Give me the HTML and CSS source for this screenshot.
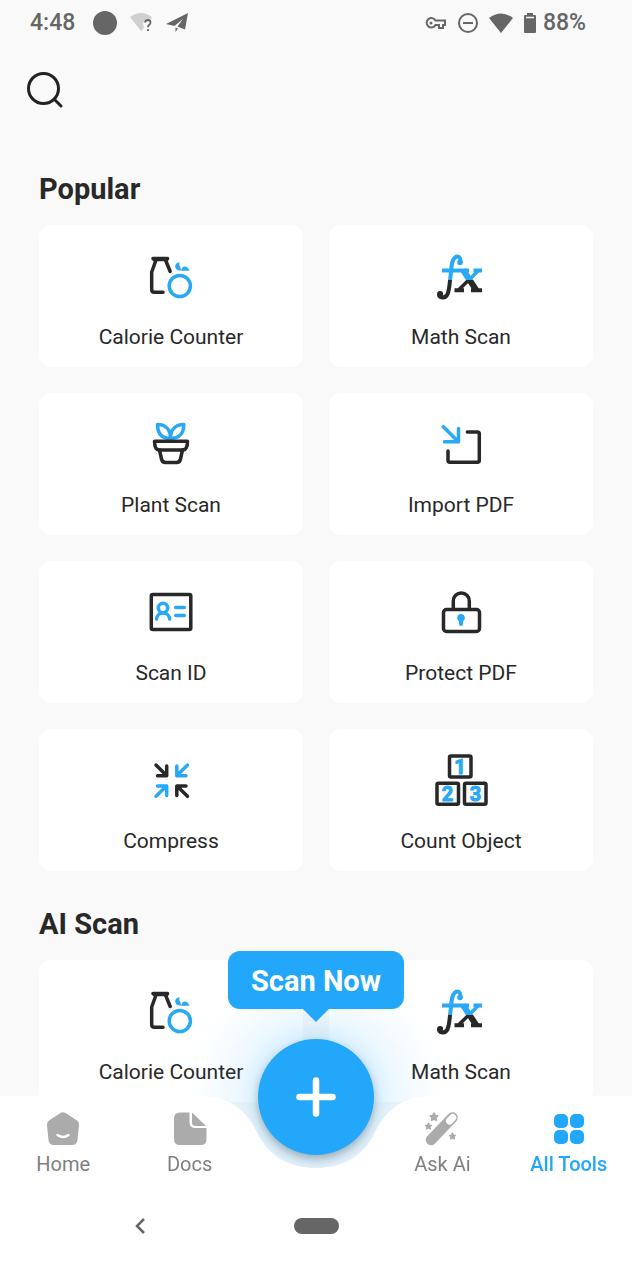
FILE: index.html
```html
<!DOCTYPE html>
<html lang="en">

<head>
  <meta charset="utf-8">
  <meta name="viewport" content="width=device-width, initial-scale=1">
  <title>All Tools</title>
  <link rel="stylesheet" href="styles.css">
</head>

<body>
  <div class="status-bar">
    <div class="status-left">
      <span class="clock">4:48</span>
      <span class="status-dot"></span>
      <svg width="26" height="24" viewBox="0 0 26 24">
        <path d="M1 6 Q12 -2 23 6 L21 9 Q15 8 14 13 L15 17 L12 20Z" fill="#d0d0d0"/>
        <path d="M16 11.500 Q16.500 9 19 9 Q21.500 9.200 21.500 11.500 Q21.500 13 20 14 Q19 15 19 16.300 M19 18 V20" fill="none" stroke="#666" stroke-width="1.800"/>
      </svg>
      <svg width="24" height="24" viewBox="0 0 24 24">
        <path d="M1 13 L23 2 L20 18.500 L12.500 15.500 L18 8 L9.500 15Z M10.500 16.500 L13 17.500 L10.500 21Z" fill="#666"/>
      </svg>
    </div>
    <div class="status-right">
      <svg width="22" height="24" viewBox="0 0 22 24" fill="none" stroke="#666" stroke-width="2">
        <path d="M10.500 9.500 H20 V14 H18 V17 H14 V14 H10.500 A4.700 4.700 0 1 1 10.500 9.500Z"/>
        <circle cx="6" cy="12" r="1.500" fill="#666" stroke="none"/>
      </svg>
      <svg width="22" height="24" viewBox="0 0 22 24" fill="none" stroke="#666" stroke-width="2">
        <circle cx="11" cy="12" r="9"/>
        <path d="M6 12 H16"/>
      </svg>
      <svg width="24" height="24" viewBox="0 0 24 24">
        <path d="M0 7 Q12 -2 24 7 L12 22Z" fill="#666"/>
      </svg>
      <div class="battery">
        <svg width="14" height="24" viewBox="0 0 14 24">
          <path d="M4 2 H10 V4 H12 Q13 4 13 5 V21 Q13 22 12 22 H2 Q1 22 1 21 V5 Q1 4 2 4 H4Z" fill="#666"/>
          <path d="M3 6.500 H11" stroke="#f9f9f9" stroke-width="1.500"/>
        </svg>
        <span>88%</span>
      </div>
    </div>
  </div>

  <header class="top-bar">
    <button class="search-button" aria-label="Search">
      <svg width="40" height="40" viewBox="0 0 40 40" fill="none" stroke="#222" stroke-width="3" stroke-linecap="round">
        <circle cx="18.500" cy="18.500" r="15"/>
        <path d="M29.500 29.500 L36 36"/>
      </svg>
    </button>
  </header>

  <main>
    <section>
      <h2>Popular</h2>
      <div class="tools">
        <button class="tool">
          <svg class="tool-icon" viewBox="0 0 64 64">
            <path class="dark" d="M14 13.500 H28.500" stroke-width="5"/>
            <path class="dark" d="M15 14.500 H28 M17 15 L12.700 27 V44.500 Q12.700 47.300 15.500 47.300 H24 M26.500 15 L31.200 26.500"/>
            <circle class="blue" cx="40.800" cy="41" r="10.600"/>
            <path class="blue-fill" d="M40.500 17 C34.500 18 34.500 26 42 25.500 C42 21.500 39.500 21 40.500 17Z M42 25.800 C43 20 48.500 20 50.500 25.800Z"/>
          </svg>
          <span>Calorie Counter</span>
        </button>
        <button class="tool">
          <svg class="tool-icon" viewBox="0 0 64 64">
            <defs>
              <linearGradient id="fx-split" gradientUnits="userSpaceOnUse" x1="0" y1="0" x2="0" y2="64">
                <stop offset="0.55" stop-color="#27a9f5"/>
                <stop offset="0.55" stop-color="#282828"/>
              </linearGradient>
            </defs>
            <g fill="none" stroke="url(#fx-split)" stroke-linecap="round" stroke-linejoin="round">
              <path stroke-width="4" d="M31.500 16.500 C32 12 28.500 10.500 26 12.500 C23 15 22.500 20 22 27 L20.500 40 C19.500 48 18.500 52 14 52.500 C10.500 52.700 9.500 50.500 10.500 48.500"/>
              <path stroke-width="4" stroke-linecap="butt" d="M13 25.500 H40 M44.500 25.500 H53 M25.500 45.200 H35 M42 45.200 H53"/>
              <path stroke-width="3.500" d="M48.500 26.500 L30.500 44"/>
              <path stroke-width="6" stroke-linecap="butt" d="M34 25 L47.500 45.500"/>
            </g>
            <circle cx="31" cy="17.500" r="2.800" fill="#27a9f5"/>
            <circle cx="11.200" cy="49" r="3" fill="#282828"/>
          </svg>
          <span>Math Scan</span>
        </button>
        <button class="tool">
          <svg class="tool-icon" viewBox="0 0 64 64">
            <path class="blue" d="M31.500 25.500 C22.500 25.500 18.500 20 18.500 11.500 C27 11.500 31.500 17 31.500 25.500Z M31.500 25.500 C31.500 17 36 11.500 44.800 11.500 C44.800 20 40.500 25.500 31.500 25.500Z"/>
            <path class="dark" d="M15.500 28.200 H48.500 C48.500 34 47 37 43.500 37 H20.500 C17 37 15.500 34 15.500 28.200Z"/>
            <path class="dark" d="M20.500 37 L22.500 46 Q23.300 49.500 26.500 49.500 H37.500 Q40.700 49.500 41.500 46 L43.500 37"/>
          </svg>
          <span>Plant Scan</span>
        </button>
        <button class="tool">
          <svg class="tool-icon" viewBox="0 0 64 64">
            <path class="blue" d="M14.300 13.700 L29.300 28.700 M29.500 15.500 V28.800 H15.500"/>
            <path class="dark" d="M38.300 19 H48.300 Q50.300 19 50.300 21 V47.300 Q50.300 49.300 48.300 49.300 H21 Q19 49.300 19 47.300 V38"/>
          </svg>
          <span>Import PDF</span>
        </button>
        <button class="tool">
          <svg class="tool-icon" viewBox="0 0 64 64">
            <rect class="dark" x="12.300" y="13.500" width="39.500" height="35" rx="1.500"/>
            <circle class="blue" cx="24" cy="27" r="4.700"/>
            <path class="blue" d="M17.500 38 C18.500 30 29.700 30 30.800 38 M36.700 26.500 H45.300 M36.700 34.500 H45.300"/>
          </svg>
          <span>Scan ID</span>
        </button>
        <button class="tool">
          <svg class="tool-icon" viewBox="0 0 64 64">
            <rect class="dark" x="14.500" y="28.500" width="36" height="22" rx="3"/>
            <path class="dark" d="M24.300 28 V20 A8 8 0 0 1 40.300 20 V28"/>
            <path class="blue-fill" d="M32 33 A3.900 3.900 0 0 1 34 40.200 V43 Q34 45 32 45 Q30 45 30 43 V40.200 A3.900 3.900 0 0 1 32 33Z"/>
          </svg>
          <span>Protect PDF</span>
        </button>
        <button class="tool">
          <svg class="tool-icon" viewBox="0 0 64 64">
            <path class="dark" d="M17 16 L27.500 26.500 M27.700 17 V26.700 H18.500"/>
            <path class="blue" d="M48.500 16 L38 26.500 M37.800 17 V26.700 H47"/>
            <path class="blue" d="M17 47.300 L27.500 37 M27.700 46.500 V37 H18.500"/>
            <path class="dark" d="M48.500 47.300 L38 37 M37.800 46.500 V37 H47"/>
          </svg>
          <span>Compress</span>
        </button>
        <button class="tool">
          <svg class="tool-icon" viewBox="0 0 64 64">
            <rect class="dark" x="20.500" y="7" width="21.500" height="21" rx="1.500"/>
            <rect class="dark" x="8" y="34.300" width="21.500" height="21" rx="1.500"/>
            <rect class="dark" x="35.500" y="34.300" width="21.500" height="21" rx="1.500"/>
            <g class="digits">
              <text x="31" y="25">1</text>
              <text x="18.500" y="52">2</text>
              <text x="46.500" y="52">3</text>
            </g>
          </svg>
          <span>Count Object</span>
        </button>
      </div>
    </section>

    <section>
      <h2>AI Scan</h2>
      <div class="tools">
        <button class="tool">
          <svg class="tool-icon" viewBox="0 0 64 64">
            <path class="dark" d="M14 13.500 H28.500" stroke-width="5"/>
            <path class="dark" d="M15 14.500 H28 M17 15 L12.700 27 V44.500 Q12.700 47.300 15.500 47.300 H24 M26.500 15 L31.200 26.500"/>
            <circle class="blue" cx="40.800" cy="41" r="10.600"/>
            <path class="blue-fill" d="M40.500 17 C34.500 18 34.500 26 42 25.500 C42 21.500 39.500 21 40.500 17Z M42 25.800 C43 20 48.500 20 50.500 25.800Z"/>
          </svg>
          <span>Calorie Counter</span>
        </button>
        <button class="tool">
          <svg class="tool-icon" viewBox="0 0 64 64">
            <g fill="none" stroke="url(#fx-split)" stroke-linecap="round" stroke-linejoin="round">
              <path stroke-width="4" d="M31.500 16.500 C32 12 28.500 10.500 26 12.500 C23 15 22.500 20 22 27 L20.500 40 C19.500 48 18.500 52 14 52.500 C10.500 52.700 9.500 50.500 10.500 48.500"/>
              <path stroke-width="4" stroke-linecap="butt" d="M13 25.500 H40 M44.500 25.500 H53 M25.500 45.200 H35 M42 45.200 H53"/>
              <path stroke-width="3.500" d="M48.500 26.500 L30.500 44"/>
              <path stroke-width="6" stroke-linecap="butt" d="M34 25 L47.500 45.500"/>
            </g>
            <circle cx="31" cy="17.500" r="2.800" fill="#27a9f5"/>
            <circle cx="11.200" cy="49" r="3" fill="#282828"/>
          </svg>
          <span>Math Scan</span>
        </button>
      </div>
    </section>
  </main>

  <footer class="bottom">
    <div class="glow"></div>
    <nav class="tabs">
      <!-- white bar with the notch in the middle -->
      <div class="tabs-shape">
        <span></span>
        <svg width="240" height="92" viewBox="0 0 240 92">
          <path d="M0 0 H4 C42 1 54 22 63 40 C76 64 98 72 120 72 C142 72 164 64 177 40 C186 22 198 1 236 0 H240 V92 H0Z" fill="#fff"/>
        </svg>
        <span></span>
      </div>
      <a class="tab" href="#home">
        <svg width="36" height="36" viewBox="0 0 36 36">
          <path d="M15.500 2 Q18 0.300 20.500 2 L32 9.500 Q34.300 11 34 14 L32.500 29 Q32 34 27 34 H9 Q4 34 3.500 29 L2 14 Q1.700 11 4 9.500Z" fill="#ababab"/>
          <path d="M12.500 24 Q18 28 23.500 24" fill="none" stroke="#fff" stroke-width="2.500" stroke-linecap="round"/>
        </svg>
        Home
      </a>
      <a class="tab" href="#docs">
        <svg width="36" height="36" viewBox="0 0 36 36" fill="#ababab">
          <path d="M8 1.500 H17.500 V11 Q17.500 17 23.500 17 H34.500 V28 Q34.500 34 28.500 34 H8 Q2 34 2 28 V7.500 Q2 1.500 8 1.500Z"/>
          <path d="M20 1.500 L34 15 H23.500 Q20 15 20 11.500Z"/>
        </svg>
        Docs
      </a>
      <div class="scan">
        <div class="scan-tip">Scan Now</div>
        <button class="scan-button" aria-label="Scan">
          <svg width="40" height="40" viewBox="0 0 40 40">
            <path d="M20 3.500 V36.500 M3.500 20 H36.500" stroke="#fff" stroke-width="6.500" stroke-linecap="round"/>
          </svg>
        </button>
      </div>
      <a class="tab" href="#ask">
        <svg width="36" height="36" viewBox="0 0 36 36">
          <path d="M7 29 L28.500 6.500" stroke="#ababab" stroke-width="10.500" stroke-linecap="round"/>
          <path d="M25.500 10 L28.800 6.500" stroke="#fff" stroke-width="7" stroke-linecap="round"/>
          <g fill="#ababab" stroke="#ababab" stroke-width="1.500" stroke-linejoin="round">
            <path id="star" d="M10 2 L11.200 4.400 L13.800 4.800 L11.900 6.700 L12.400 9.400 L10 8.100 L7.600 9.400 L8.100 6.700 L6.200 4.800 L8.800 4.400Z"/>
            <use href="#star" transform="translate(-3.500 10.500) scale(0.800)"/>
            <use href="#star" transform="translate(20.500 20.500) scale(0.800)"/>
          </g>
        </svg>
        Ask Ai
      </a>
      <a class="tab active" href="#tools">
        <svg width="36" height="36" viewBox="0 0 36 36" fill="#22a7fb">
          <rect x="3" y="3" width="14" height="14" rx="5"/>
          <rect x="19" y="3" width="14" height="14" rx="5"/>
          <rect x="3" y="19" width="14" height="14" rx="5"/>
          <rect x="19" y="19" width="14" height="14" rx="5"/>
        </svg>
        All Tools
      </a>
    </nav>
    <div class="system-bar">
      <button aria-label="Back">
        <svg width="16" height="20" viewBox="0 0 16 20">
          <path d="M12 3 L5 10 L12 17" fill="none" stroke="#666" stroke-width="2.500"/>
        </svg>
      </button>
      <button aria-label="Home screen"><span class="pill"></span></button>
    </div>
  </footer>
</body>

</html>
```
FILE: styles.css
```css
* {
  box-sizing: border-box;
}
body {
  margin: 0;
  min-height: 100vh;
  background: #f9f9f9;
  color: #282828;
  font-family: Roboto, "Liberation Sans", sans-serif;
}
button {
  margin: 0;
  padding: 0;
  border: 0;
  background: none;
  color: inherit;
  font: inherit;
  cursor: pointer;
}
svg {
  display: block;
}

.status-bar {
  display: flex;
  justify-content: space-between;
  height: 46px;
  padding: 0 46px 0 30px;
  color: #666;
  font-size: 23px;
  font-weight: 500;
  line-height: 46px;
}
.status-left,
.status-right {
  display: flex;
  align-items: center;
}
.status-left {
  gap: 10px;
}
.status-right {
  gap: 10px;
}
.status-dot {
  width: 24px;
  height: 24px;
  margin: 0 2px 0 8px;
  border-radius: 50%;
  background: #666;
}
.battery {
  display: flex;
  align-items: center;
  gap: 6px;
}

.top-bar {
  height: 125px;
  padding: 24px 25px;
}

main {
  padding: 0 39px 120px;
}
h2 {
  margin: 0 0 18px;
  font-size: 29px;
  font-weight: 700;
  line-height: 36px;
}
section + section {
  margin-top: 35px;
}
.tools {
  display: grid;
  grid-template-columns: 1fr 1fr;
  gap: 26px;
}
.tool {
  display: flex;
  flex-direction: column;
  align-items: center;
  gap: 14px;
  padding: 20px 8px 16px;
  border-radius: 12px;
  background: #fff;
  font-size: 21px;
  line-height: 28px;
}
.tool-icon {
  width: 64px;
  height: 64px;
}
.dark,
.blue {
  fill: none;
  stroke: #282828;
  stroke-width: 3.5px;
  stroke-linecap: round;
  stroke-linejoin: round;
}
.blue {
  stroke: #27a9f5;
}
.blue-fill {
  fill: #27a9f5;
}
.digits {
  fill: #27a9f5;
  stroke: #27a9f5;
  font-size: 20px;
  font-weight: 700;
  text-anchor: middle;
}

.bottom {
  position: fixed;
  right: 0;
  bottom: 0;
  left: 0;
}
.glow {
  position: absolute;
  top: -130px;
  left: calc(50% - 130px);
  width: 260px;
  height: 260px;
  background: radial-gradient(circle closest-side, rgba(34, 167, 251, 0.22) 40%, rgba(34, 167, 251, 0.09) 58%, rgba(34, 167, 251, 0.03) 80%, rgba(34, 167, 251, 0));
}
.tabs {
  position: relative;
  display: grid;
  grid-template-columns: repeat(5, 1fr);
  height: 92px;
}
.tabs-shape {
  position: absolute;
  top: 0;
  right: 0;
  bottom: 0;
  left: 0;
  display: flex;
}
.tabs-shape span {
  flex: 1;
  background: #fff;
}
.tab {
  position: relative;
  display: flex;
  flex-direction: column;
  align-items: center;
  gap: 9px;
  padding-top: 15px;
  color: #808080;
  font-size: 20px;
  line-height: 16px;
  text-decoration: none;
}
.tab.active {
  color: #22a7fb;
  font-weight: 500;
}

.scan {
  position: relative;
}
.scan-button {
  position: absolute;
  top: -57px;
  left: calc(50% - 58px);
  display: flex;
  align-items: center;
  justify-content: center;
  width: 116px;
  height: 116px;
  border-radius: 50%;
  background: #22a7fb;
  box-shadow: 0 4px 8px rgba(0, 0, 0, 0.25);
}
.scan-tip {
  position: absolute;
  top: -145px;
  left: 50%;
  padding: 12px 23px 10px;
  border-radius: 12px;
  background: #22a7fb;
  color: #fff;
  font-size: 29px;
  font-weight: 700;
  line-height: 36px;
  white-space: nowrap;
  transform: translateX(-50%);
}
.scan-tip::after {
  content: "";
  position: absolute;
  top: 100%;
  left: calc(50% - 13px);
  border: 13px solid transparent;
  border-top-color: #22a7fb;
  border-bottom: 0;
}

.system-bar {
  position: relative;
  display: grid;
  grid-template-columns: repeat(3, 1fr);
  height: 76px;
  padding: 0 52px;
  background: #fff;
}
.system-bar button {
  display: flex;
  align-items: center;
  justify-content: center;
}
.pill {
  width: 45px;
  height: 16px;
  border-radius: 8px;
  background: #666;
}
```
